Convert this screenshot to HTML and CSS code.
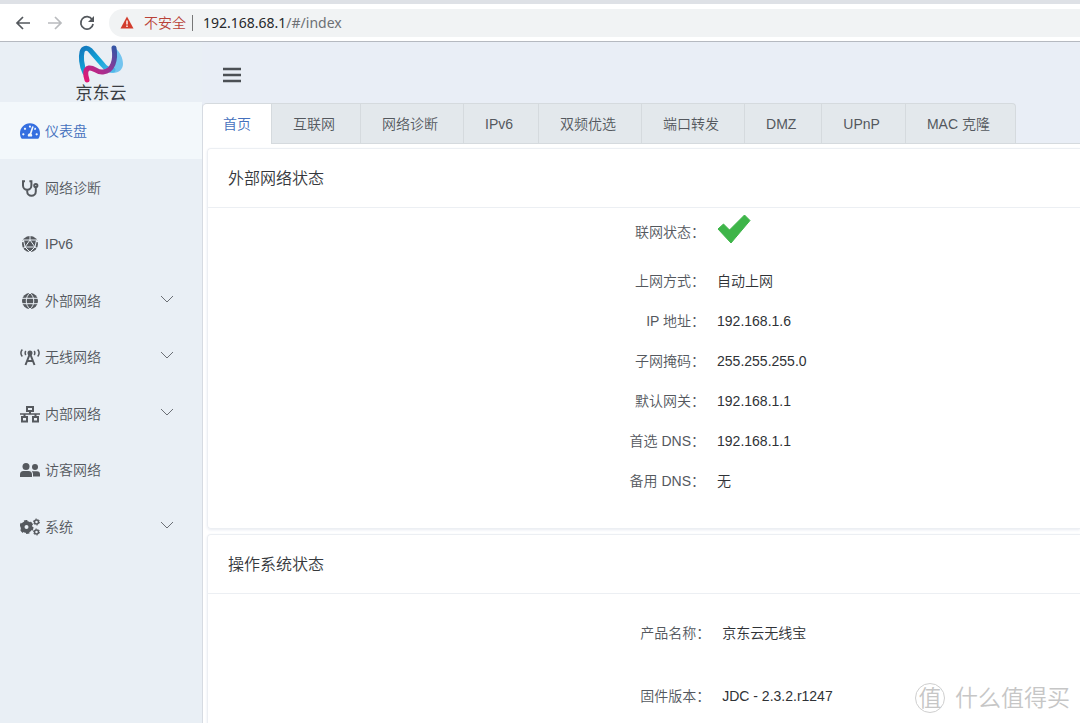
FILE: index.html
```
<!DOCTYPE html>
<html lang="zh-CN">
<head>
<meta charset="utf-8">
<title>京东云无线宝</title>
<link rel="stylesheet" href="styles.css">
</head>
<body>
<div class="window">
  <header class="browser">
    <button class="nav" type="button" aria-label="后退"><svg width="16" height="16" viewBox="0 0 16 16"><path d="M15 8H2.500M8 2L2 8l6 6"/></svg></button>
    <button class="nav nav-off" type="button" aria-label="前进"><svg width="16" height="16" viewBox="0 0 16 16"><path d="M1 8h12.500M8 2l6 6-6 6"/></svg></button>
    <button class="nav" type="button" aria-label="刷新"><svg width="16" height="16" viewBox="0 0 16 16"><path d="M13.200 4.500A6.200 6.200 0 1 0 14.100 9"/><path class="solid" d="M15 1v6H9z"/></svg></button>
    <div class="address">
      <svg class="warn" width="14" height="13" viewBox="0 0 14 13"><path d="M7 .5L13.500 12.500H.5z" fill="#d23c2c"/><path d="M7 4.500v4M7 9.600v1.400" stroke="#fff" stroke-width="1.400"/></svg>
      <span class="insecure">不安全</span>
      <span class="url">192.168.68.1<span class="path">/#/index</span></span>
    </div>
  </header>

  <div class="app">
    <aside class="sidebar">
      <a class="brand" href="#/index">
        <svg width="46" height="40" viewBox="0 0 46 40" fill="none" stroke-linecap="round" stroke-linejoin="round">
          <defs>
            <linearGradient id="blue" x1="0" y1="0" x2="1" y2="1"><stop offset="0" stop-color="#1378bd"/><stop offset=".5" stop-color="#11a5d8"/><stop offset="1" stop-color="#53b9e8"/></linearGradient>
            <linearGradient id="pink" x1="0" y1="1" x2="1" y2="0"><stop offset="0" stop-color="#e01875"/><stop offset=".55" stop-color="#9b3394"/><stop offset="1" stop-color="#3555a5"/></linearGradient>
          </defs>
          <path d="M37 4c5 4 8 10 8 16 0 5-4 9-10 9-4 0-7-2-9-4 9 0 12-8 11-21z" fill="#73c4ef"/>
          <path d="M7 29C3 21 3 12 4 8c1-4 5-5 8-2l13 15c3 4 6 5 10 5" stroke="url(#blue)" stroke-width="5"/>
          <path d="M36 4c2 12-1 23-11 24-6 1-9-5-14-4-4 1-4 6-2 12" stroke="url(#pink)" stroke-width="5"/>
        </svg>
        <span class="brand-name">京东云</span>
      </a>
      <nav>
        <ul class="menu">
          <li><a class="item active" href="#/index"><svg class="icon" viewBox="0 0 576 512"><path d="M288 32C128.940 32 0 160.940 0 320c0 52.800 14.250 102.260 39.060 144.800 5.610 9.620 16.300 15.200 27.440 15.200h443c11.140 0 21.830-5.580 27.440-15.200C561.750 422.260 576 372.800 576 320c0-159.060-128.940-288-288-288zm0 64c14.710 0 26.580 10.130 30.320 23.650-1.110 2.260-2.640 4.230-3.450 6.670l-9.220 27.670c-5.130 3.490-10.970 6.010-17.640 6.010-17.670 0-32-14.330-32-32S270.330 96 288 96zM96 384c-17.670 0-32-14.330-32-32s14.330-32 32-32 32 14.330 32 32-14.330 32-32 32zm48-160c-17.670 0-32-14.330-32-32s14.330-32 32-32 32 14.330 32 32-14.330 32-32 32zm246.770-72.410l-61.330 184C343.130 347.330 352 364.540 352 384c0 11.720-3.380 22.550-8.880 32H232.880c-5.500-9.450-8.880-20.280-8.880-32 0-33.940 26.500-61.430 59.900-63.590l61.340-184.010c4.170-12.560 17.730-19.450 30.360-15.170 12.570 4.190 19.350 17.790 15.170 30.360zm14.660 57.200l15.520-46.550c3.470-1.290 7.130-2.230 11.050-2.230 17.670 0 32 14.330 32 32s-14.330 32-32 32c-11.380-.01-20.890-6.280-26.570-15.220zM480 384c-17.670 0-32-14.330-32-32s14.330-32 32-32 32 14.330 32 32-14.330 32-32 32z"/></svg><span>仪表盘</span></a></li>
          <li><a class="item" href="#/diagnose"><svg class="icon line" viewBox="0 0 20 18"><path d="M5 2.200H3v4.300a4.200 4.200 0 0 0 8.400 0V2.200h-2M7.200 11v1.500a4.300 4.300 0 0 0 8.600 0V8"/><circle cx="15.800" cy="6.500" r="1.600"/></svg><span>网络诊断</span></a></li>
          <li><a class="item" href="#/ipv6"><svg class="icon" viewBox="0 0 20 18"><circle cx="10" cy="9" r="8"/><path class="cut" d="M10 1v4M10 5L5 12h10zM5 12l-3 2M15 12l3 2M10 5L3.500 5 5 12l5 5 5-5 1.500-7zM2 6.500h2M16 6.500h2"/></svg><span>IPv6</span></a></li>
          <li><a class="item" href="#/wan"><svg class="icon" viewBox="0 0 20 18"><circle cx="10" cy="9" r="8"/><path class="cut" d="M2 6.300h16M2 11.700h16M10 1C5 5 5 13 10 17M10 1c5 4 5 12 0 16"/></svg><span>外部网络</span><svg class="arrow" viewBox="0 0 14 8"><path d="M1 1l6 6 6-6"/></svg></a></li>
          <li><a class="item" href="#/wifi"><svg class="icon line" viewBox="0 0 20 18"><path d="M5.500 17L10 5.500 14.500 17M7.500 13h5"/><circle class="solid" cx="10" cy="5" r="1.500"/><path class="thin" d="M2.300 1.500c-1.600 2-1.600 5 0 7M17.700 1.500c1.600 2 1.600 5 0 7M5.800 3c-.8 1.300-.8 2.800 0 4M14.200 3c.8 1.300.8 2.800 0 4"/></svg><span>无线网络</span><svg class="arrow" viewBox="0 0 14 8"><path d="M1 1l6 6 6-6"/></svg></a></li>
          <li><a class="item" href="#/lan"><svg class="icon line" viewBox="0 0 20 18"><path d="M7 2h6v4H7zM2 12h5v4.500H2zM13 12h5v4.500h-5zM10 6v3M4.500 9v3M15.500 9v3"/><path class="thin" d="M0 9h20"/></svg><span>内部网络</span><svg class="arrow" viewBox="0 0 14 8"><path d="M1 1l6 6 6-6"/></svg></a></li>
          <li><a class="item" href="#/guest"><svg class="icon" viewBox="0 0 20 18"><circle cx="6" cy="5.500" r="3.500"/><circle cx="15" cy="6" r="3"/><path d="M0 16v-2.500a3.500 3.500 0 0 1 3.500-3.500h5a3.500 3.500 0 0 1 3.500 3.500V16zM13 15.500v-2.300c0-1.200-.5-2.200-1.200-3h5.200a3 3 0 0 1 3 3v2.300z"/></svg><span>访客网络</span></a></li>
          <li><a class="item" href="#/system"><svg class="icon line" viewBox="0 0 20 18"><circle class="gear" cx="6.500" cy="9" r="4"/><circle class="teeth" cx="6.500" cy="9" r="6"/><circle class="small" cx="16.500" cy="4" r="2"/><circle class="small" cx="16.500" cy="14" r="2"/><circle class="small-teeth" cx="16.500" cy="4" r="3"/><circle class="small-teeth" cx="16.500" cy="14" r="3"/></svg><span>系统</span><svg class="arrow" viewBox="0 0 14 8"><path d="M1 1l6 6 6-6"/></svg></a></li>
        </ul>
      </nav>
    </aside>

    <main class="main">
      <div class="toolbar">
        <button class="burger" type="button" aria-label="折叠菜单"><svg width="18" height="16" viewBox="0 0 18 16"><path d="M0 2h18M0 8h18M0 14h18" stroke="#4c5055" stroke-width="2.600"/></svg></button>
      </div>
      <section class="board">
        <div class="tabbar">
          <div class="tabs" role="tablist">
            <button class="tab current" type="button" role="tab" aria-selected="true">首页</button>
            <button class="tab" type="button" role="tab">互联网</button>
            <button class="tab" type="button" role="tab">网络诊断</button>
            <button class="tab" type="button" role="tab">IPv6</button>
            <button class="tab" type="button" role="tab">双频优选</button>
            <button class="tab" type="button" role="tab">端口转发</button>
            <button class="tab" type="button" role="tab">DMZ</button>
            <button class="tab" type="button" role="tab">UPnP</button>
            <button class="tab" type="button" role="tab">MAC 克隆</button>
          </div>
        </div>
        <div class="panels">
          <article class="card">
            <h2 class="title">外部网络状态</h2>
            <dl class="facts">
              <div class="row status"><dt>联网状态：</dt><dd><svg class="tick" width="34" height="30" viewBox="0 0 34 30"><path d="M1 15l5.500-5 6 6L27.500 1 33 6.500 14 29z" fill="#3eb549" stroke="#3eb549" stroke-linejoin="round"/></svg></dd></div>
              <div class="row"><dt>上网方式：</dt><dd>自动上网</dd></div>
              <div class="row"><dt>IP 地址：</dt><dd>192.168.1.6</dd></div>
              <div class="row"><dt>子网掩码：</dt><dd>255.255.255.0</dd></div>
              <div class="row"><dt>默认网关：</dt><dd>192.168.1.1</dd></div>
              <div class="row"><dt>首选 DNS：</dt><dd>192.168.1.1</dd></div>
              <div class="row"><dt>备用 DNS：</dt><dd>无</dd></div>
            </dl>
          </article>
          <article class="card">
            <h2 class="title">操作系统状态</h2>
            <dl class="facts system">
              <div class="row"><dt>产品名称：</dt><dd>京东云无线宝</dd></div>
              <div class="row"><dt>固件版本：</dt><dd>JDC - 2.3.2.r1247</dd></div>
            </dl>
          </article>
        </div>
      </section>
    </main>
  </div>
  <div class="watermark"><span class="seal">值</span><span>什么值得买</span></div>
</div>
</body>
</html>
```
FILE: styles.css
```
* { box-sizing: border-box; }
body {
  margin: 0;
  font: 14px/20px "Liberation Sans", "Noto Sans CJK SC", sans-serif;
  font-weight: 350;
  color: #54585e;
  background: #e9eef6;
}
button { font: inherit; color: inherit; border: 0; padding: 0; background: none; }
a { color: inherit; text-decoration: none; }
ul, dl, dd, h2 { margin: 0; padding: 0; list-style: none; font-weight: inherit; }
svg { flex: none; display: block; }

.window { position: relative; height: 100vh; overflow: hidden; display: flex; flex-direction: column; }

.browser {
  flex: none;
  display: flex;
  align-items: center;
  gap: 16px;
  height: 42px;
  padding-left: 15px;
  background: #fff;
  border-top: 4px solid #dee1e6;
  border-bottom: 1px solid #b5b9c0;
}
.nav svg { fill: none; stroke: #54585d; stroke-width: 1.7; }
.nav .solid { fill: #54585d; stroke: none; }
.nav-off svg { stroke: #b9bbbe; }
.address {
  flex: 1;
  display: flex;
  align-items: center;
  height: 28px;
  margin-left: -2px;
  padding-left: 11px;
  border-radius: 14px 0 0 14px;
  background: #f1f3f4;
  font-family: "Noto Sans", "Noto Sans CJK SC", sans-serif;
  font-weight: 400;
}
.insecure { margin-left: 10px; padding-right: 6px; color: #b94238; border-right: 1px solid #777; line-height: 16px; font-weight: 350; }
.url { margin-left: 10px; color: #26282b; }
.path { color: #6d7074; }

.app { flex: 1; display: flex; min-height: 0; }
.sidebar { flex: none; width: 202px; background: #e9eff5; }
.brand { display: flex; flex-direction: column; align-items: center; gap: 1px; height: 60px; padding-top: 2px; }
.brand-name { font-size: 17px; line-height: 17px; font-weight: 400; color: #3b3e43; }
.menu { display: grid; grid-auto-rows: 1fr; height: 452px; }
.item { display: flex; align-items: center; height: 100%; padding: 2px 28px 0 20px; }
.item span { margin-left: 5px; flex: 1; }
.active { color: #4470bd; background: #f3f8fb; }
.icon { width: 20px; height: 18px; fill: #55595e; }
.active .icon { fill: #356fe0; }
.line { fill: none; stroke: #55595e; stroke-width: 2; }
.line .thin { stroke-width: 1.5; }
.line .solid { fill: #55595e; }
.cut { fill: none; stroke: #e9eff5; stroke-width: 1; }
.line .gear { stroke-width: 4; }
.line .teeth { stroke-width: 2; stroke-dasharray: 3.3 2.98; }
.line .small { stroke-width: 1.5; }
.line .small-teeth { stroke-width: 1; stroke-dasharray: 1.5 1.64; }
.arrow { width: 14px; height: 8px; fill: none; stroke: #6b6f75; margin-bottom: 4px; }

.main { flex: 1; min-width: 0; display: flex; flex-direction: column; }
.toolbar { flex: none; display: flex; align-items: center; height: 61px; padding: 5px 0 0 21px; }
.board { flex: 1; min-height: 0; background: #fff; border-left: 1px solid #d6dbe2; border-top-left-radius: 4px; }
.tabbar { background: #e9eef6; border-bottom: 1px solid #d5dade; }
.tabs {
  display: flex;
  width: max-content;
  background: #e3e8ec;
  border-top: 1px solid #d5dade;
  border-right: 1px solid #d5dade;
  border-radius: 4px 4px 0 0;
}
.tab { height: 39px; padding: 0 25px 0 21px; border-left: 1px solid #d5dade; white-space: nowrap; }
.current { padding: 0 20px 1px; border-left: 0; margin-bottom: -1px; height: 40px; background: #fff; color: #4470bd; border-radius: 4px 0 0 0; }
.panels { display: flex; flex-direction: column; gap: 5px; padding: 4px 0 0 4px; }
.card { border: 1px solid #eceff3; border-right: 0; border-radius: 4px 0 0 4px; box-shadow: 0 1px 3px #e8ebf2; }
.title { padding: 20px 20px 18px; font-size: 16px; line-height: 20px; color: #35383c; border-bottom: 1px solid #eceff3; }
.facts { padding-bottom: 27px; }
.row { display: grid; grid-template-columns: 57fr 43fr; line-height: 40px; }
.row dt { text-align: right; }
.row dd { padding-left: 12px; color: #2f3236; }
.status { line-height: 48px; margin-bottom: 5px; }
.tick { margin-top: 6px; }
.system { padding-top: 8px; padding-left: 12px; }
.system .row { line-height: 63px; }

.watermark {
  position: absolute;
  right: 10px;
  bottom: 10px;
  display: flex;
  align-items: center;
  gap: 10px;
  font-size: 23px;
  line-height: 30px;
  color: #c6c6c6;
}
.seal { width: 30px; border: 1px solid #cfcfcf; border-radius: 50%; text-align: center; line-height: 28px; }
```
